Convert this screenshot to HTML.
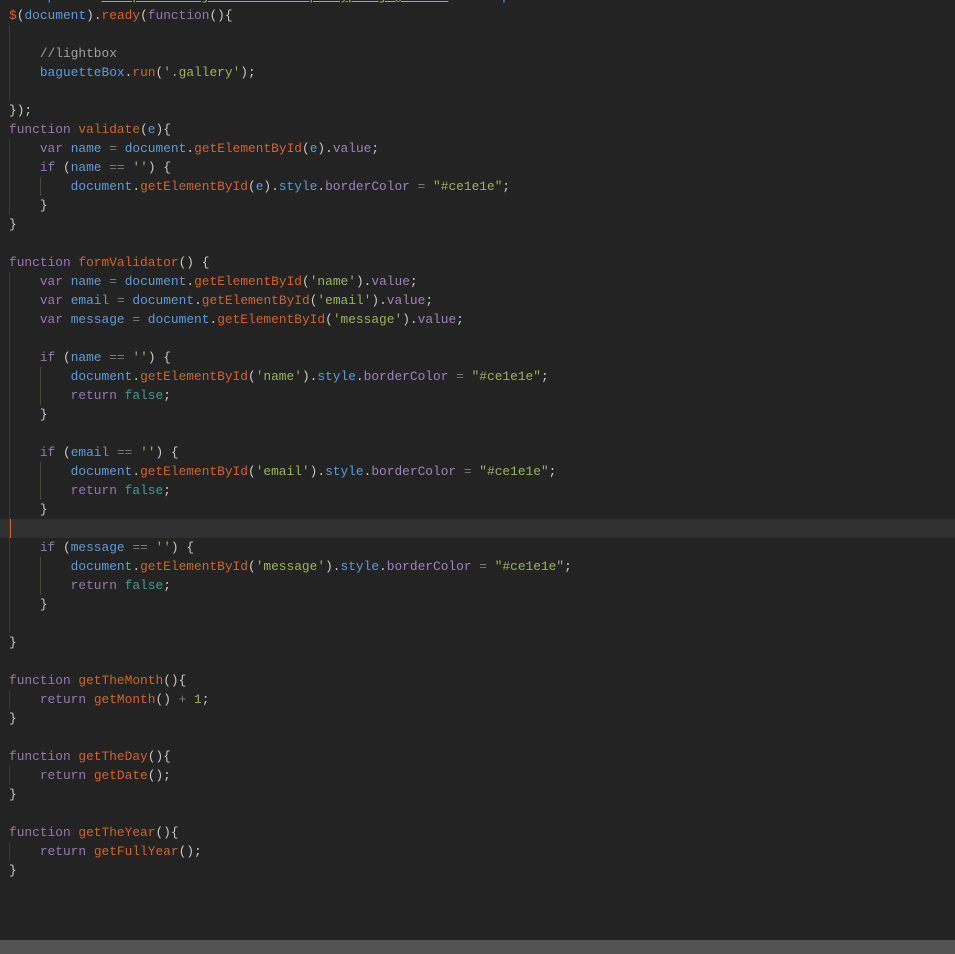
<!DOCTYPE html>
<html><head><meta charset="utf-8"><style>
html,body{margin:0;padding:0;width:955px;height:954px;overflow:hidden;background:#232323;}
.wrap{position:relative;width:955px;height:954px;}
pre{position:absolute;left:9px;top:-13px;margin:0;font-family:"Liberation Mono",monospace;font-size:12.85px;line-height:19px;color:#c8c8c8;}
.k{color:#9a76b0}.f{color:#d3632a}.i{color:#5e9ad6}.s{color:#98b55a}.p{color:#a080c0}.o{color:#7a7a7a}.c{color:#a0a0a0}.b{color:#3f9c8f}.t{color:#5e9ad6}.u{text-decoration:underline;text-decoration-color:#98b55a}
.hl{position:absolute;left:0;top:519px;width:955px;height:19px;background:#303030;}
.cur{position:absolute;left:9px;top:519px;width:2px;height:19px;background:#d3632a;}
.g{position:absolute;width:1px;background:#3a3a3a;}
.bar{position:absolute;left:0;top:940px;width:955px;height:14px;background:#535353;}
</style></head><body><div class="wrap">
<div class="hl"></div><div class="cur"></div>
<div class="g" style="left:9px;top:25px;height:76px"></div>
<div class="g" style="left:9px;top:139px;height:76px"></div>
<div class="g" style="left:40px;top:177px;height:19px;background:#4a4a30"></div>
<div class="g" style="left:9px;top:272px;height:361px"></div>
<div class="g" style="left:40px;top:367px;height:38px;background:#4a4a30"></div>
<div class="g" style="left:40px;top:462px;height:38px;background:#4a4a30"></div>
<div class="g" style="left:40px;top:557px;height:38px;background:#4a4a30"></div>
<div class="g" style="left:9px;top:690px;height:19px"></div>
<div class="g" style="left:9px;top:766px;height:19px"></div>
<div class="g" style="left:9px;top:842px;height:19px"></div>
<pre><span class="t">&lt;script</span> <span class="f">src</span>=<span class="s u">"https://cdn.jsdelivr.net/npm/typed.js@2.0.9"</span><span class="t">&gt;&lt;/script&gt;</span>
<span class="f">$</span>(<span class="i">document</span>).<span class="f">ready</span>(<span class="k">function</span>(){

    <span class="c">//lightbox</span>
    <span class="i">baguetteBox</span>.<span class="f">run</span>(<span class="s">'.gallery'</span>);

});
<span class="k">function</span> <span class="f">validate</span>(<span class="i">e</span>){
    <span class="k">var</span> <span class="i">name</span> <span class="o">=</span> <span class="i">document</span>.<span class="f">getElementById</span>(<span class="i">e</span>).<span class="p">value</span>;
    <span class="k">if</span> (<span class="i">name</span> <span class="o">==</span> <span class="s">''</span>) {
        <span class="i">document</span>.<span class="f">getElementById</span>(<span class="i">e</span>).<span class="i">style</span>.<span class="p">borderColor</span> <span class="o">=</span> <span class="s">"#ce1e1e"</span>;
    }
}

<span class="k">function</span> <span class="f">formValidator</span>() {
    <span class="k">var</span> <span class="i">name</span> <span class="o">=</span> <span class="i">document</span>.<span class="f">getElementById</span>(<span class="s">'name'</span>).<span class="p">value</span>;
    <span class="k">var</span> <span class="i">email</span> <span class="o">=</span> <span class="i">document</span>.<span class="f">getElementById</span>(<span class="s">'email'</span>).<span class="p">value</span>;
    <span class="k">var</span> <span class="i">message</span> <span class="o">=</span> <span class="i">document</span>.<span class="f">getElementById</span>(<span class="s">'message'</span>).<span class="p">value</span>;

    <span class="k">if</span> (<span class="i">name</span> <span class="o">==</span> <span class="s">''</span>) {
        <span class="i">document</span>.<span class="f">getElementById</span>(<span class="s">'name'</span>).<span class="i">style</span>.<span class="p">borderColor</span> <span class="o">=</span> <span class="s">"#ce1e1e"</span>;
        <span class="k">return</span> <span class="b">false</span>;
    }

    <span class="k">if</span> (<span class="i">email</span> <span class="o">==</span> <span class="s">''</span>) {
        <span class="i">document</span>.<span class="f">getElementById</span>(<span class="s">'email'</span>).<span class="i">style</span>.<span class="p">borderColor</span> <span class="o">=</span> <span class="s">"#ce1e1e"</span>;
        <span class="k">return</span> <span class="b">false</span>;
    }

    <span class="k">if</span> (<span class="i">message</span> <span class="o">==</span> <span class="s">''</span>) {
        <span class="i">document</span>.<span class="f">getElementById</span>(<span class="s">'message'</span>).<span class="i">style</span>.<span class="p">borderColor</span> <span class="o">=</span> <span class="s">"#ce1e1e"</span>;
        <span class="k">return</span> <span class="b">false</span>;
    }

}

<span class="k">function</span> <span class="f">getTheMonth</span>(){
    <span class="k">return</span> <span class="f">getMonth</span>() <span class="o">+</span> <span class="s">1</span>;
}

<span class="k">function</span> <span class="f">getTheDay</span>(){
    <span class="k">return</span> <span class="f">getDate</span>();
}

<span class="k">function</span> <span class="f">getTheYear</span>(){
    <span class="k">return</span> <span class="f">getFullYear</span>();
}</pre>
<div class="bar"></div>
</div></body></html>
